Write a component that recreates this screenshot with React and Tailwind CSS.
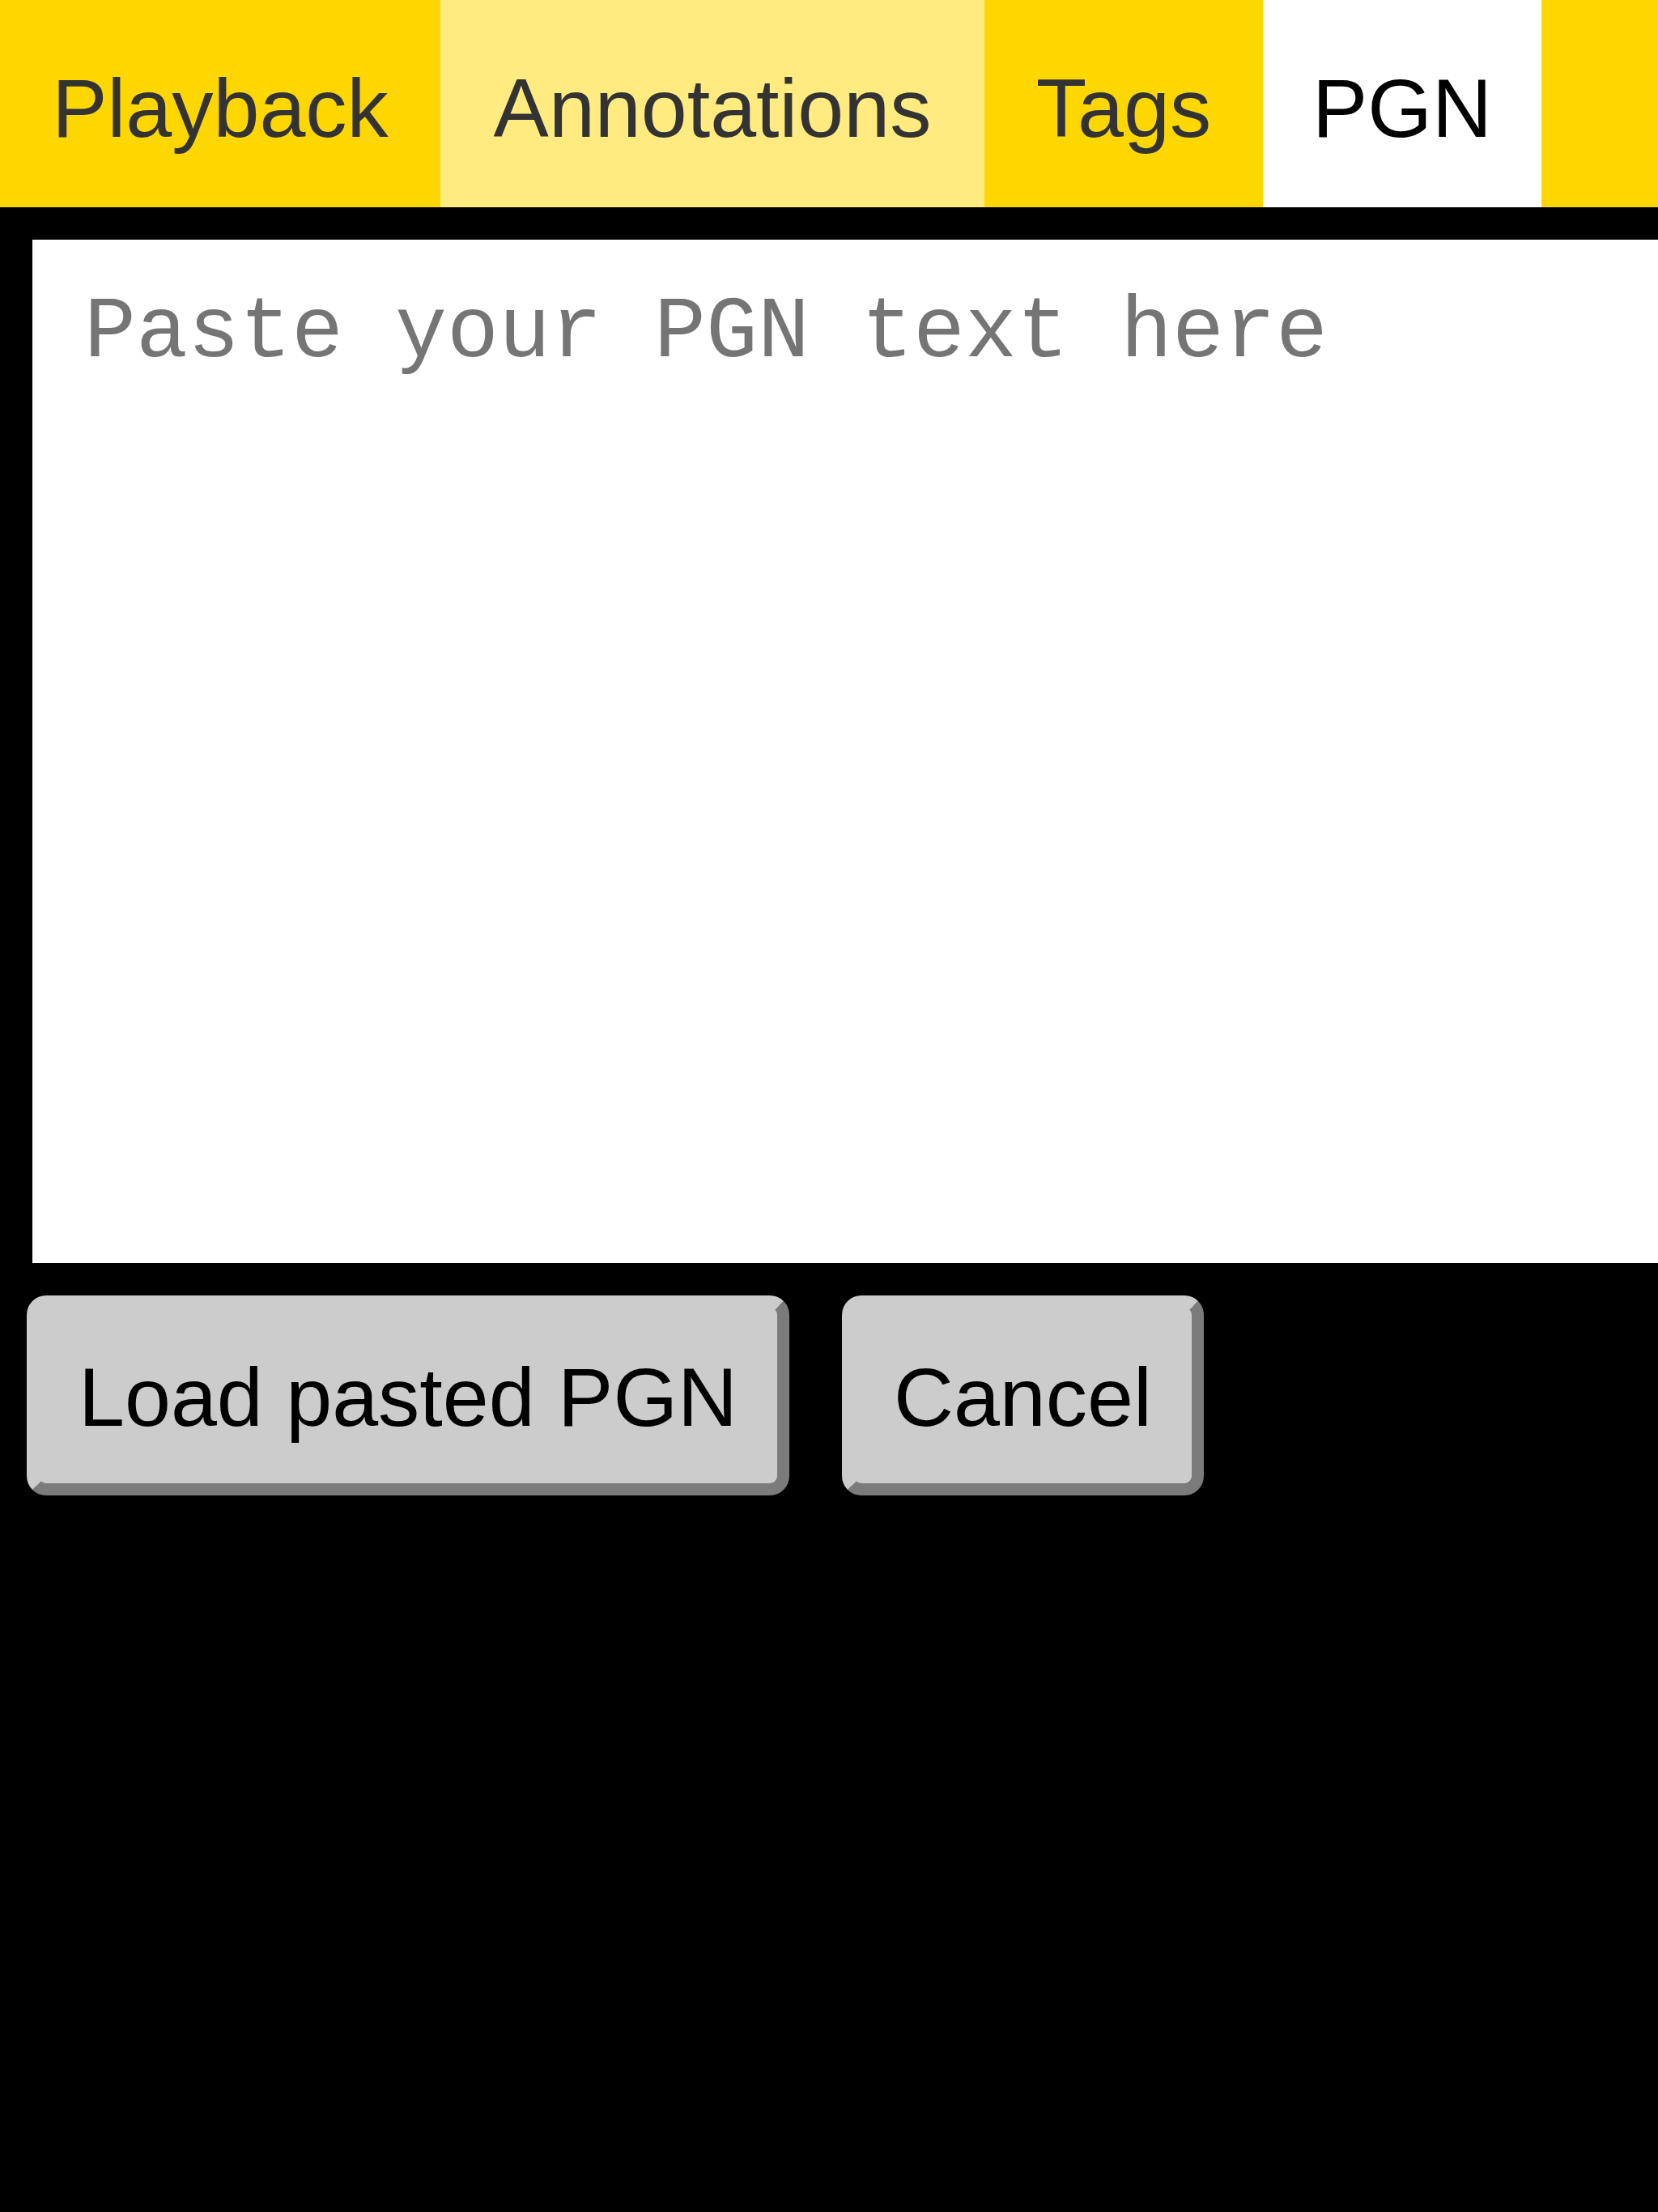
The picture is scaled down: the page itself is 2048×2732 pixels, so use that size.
import React, { useState } from 'react';

const TABS = [
  { name: 'Playback', width: 'w-[544px]', bg: 'bg-[#ffd700]' },
  { name: 'Annotations', width: 'w-[672px]', bg: 'bg-[#ffeb80]' },
  { name: 'Tags', width: 'w-[344px]', bg: 'bg-[#ffd700]' },
  { name: 'PGN', width: 'w-[344px]', bg: 'bg-white' },
];

const App = () => {
  const [active, setActive] = useState('PGN');
  const [pgn, setPgn] = useState('');

  return (
    <div className="w-[2048px] min-h-[2732px] bg-black overflow-hidden font-['Liberation_Sans',Arial,sans-serif]">
      {/* tab bar */}
      <div className="flex h-[256px] bg-[#ffd700]">
        {TABS.map(tab => (
          <button
            key={tab.name}
            onClick={() => setActive(tab.name)}
            className={`${tab.width} h-[256px] pt-[75px] text-center text-[102.4px] leading-[118px] self-start flex justify-center ${
              active === tab.name ? 'bg-white text-black' : `${tab.bg} text-[#333333]`
            }`}
          >
            {tab.name}
          </button>
        ))}
      </div>

      {/* paste area */}
      <div className="pt-[40px] pl-[40px]">
        <textarea
          value={pgn}
          onChange={e => setPgn(e.target.value)}
          placeholder="Paste your PGN text here"
          className="block w-[2100px] h-[1264px] bg-white resize-none outline-none pl-[64px] pt-[56px] text-[106.67px] leading-[120px] text-black placeholder:text-[#757575] font-['Liberation_Mono','Courier_New',monospace]"
        />
      </div>

      {/* actions */}
      <div className="flex gap-[65px] pl-[33px] pt-[40px]">
        <button className="h-[247px] rounded-[24px] border-[15px] border-t-[#cccccc] border-l-[#cccccc] border-r-[#7b7b7b] border-b-[#7b7b7b] bg-[#cccccc] px-[49px] pt-[52px] pb-[47px] text-[102.4px] leading-[118px] text-black">
          Load pasted PGN
        </button>
        <button className="h-[247px] rounded-[24px] border-[15px] border-t-[#cccccc] border-l-[#cccccc] border-r-[#7b7b7b] border-b-[#7b7b7b] bg-[#cccccc] px-[49px] pt-[52px] pb-[47px] text-[102.4px] leading-[118px] text-black">
          Cancel
        </button>
      </div>
    </div>
  );
};

export default App;
